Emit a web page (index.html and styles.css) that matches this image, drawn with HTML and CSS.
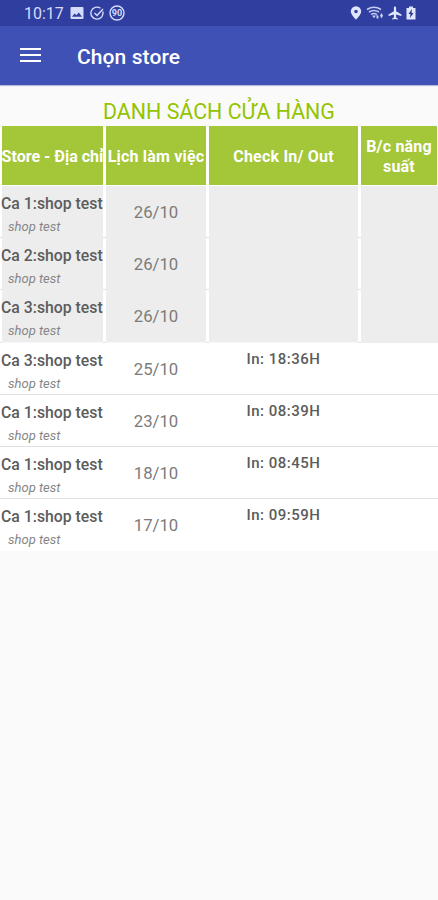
FILE: index.html
```html
<!DOCTYPE html>
<html lang="vi">

<head>
    <meta charset="UTF-8">
    <title>Chọn store</title>
    <link rel="stylesheet" href="styles.css">
</head>

<body>
    <div class="status">
        <span class="time">10:17</span>
        <svg class="picture" width="14" height="14" viewBox="0 0 14 14">
            <path fill="#d5dbfa" fill-rule="evenodd" d="M1.5 1h11q1 0 1 1v10q0 1-1 1h-11q-1 0-1-1V2q0-1 1-1zM2 10.8h10L8.8 6.5 6.300 9.300 4.500 7.500z" />
        </svg>
        <svg class="tick" width="15" height="15" viewBox="0 0 15 15" fill="none" stroke="#d5dbfa" stroke-width="1.4">
            <path d="M12.700 5.500A6 6 0 1 1 10.500 2.300M4.500 7l2.500 2.500 6-6.500" />
        </svg>
        <svg width="16" height="16" viewBox="0 0 16 16">
            <circle cx="8" cy="8" r="7" fill="none" stroke="#d5dbfa" stroke-width="1.400" />
            <text class="badge" x="8" y="11" text-anchor="middle">90</text>
        </svg>
        <div class="right">
            <svg width="12" height="14" viewBox="0 0 12 14">
                <path fill="#e1e6ff" fill-rule="evenodd" d="M6 .3a5.200 5.200 0 0 1 5.200 5.200C11.200 8.600 6 13.700 6 13.700S.8 8.600.8 5.500A5.200 5.200 0 0 1 6 .3zM6 3.700a1.800 1.800 0 1 0 0 3.600 1.800 1.800 0 0 0 0-3.600z" />
            </svg>
            <svg width="18" height="14" viewBox="0 0 18 14" fill="none" stroke="#c5cdf5">
                <path stroke-width="1.500" d="M1 3.500Q8 -.8 15 3.500M3 6Q8 3 13 6M5 8.500Q8 6.500 11 8.500" />
                <path fill="#c5cdf5" stroke="none" d="M6 9.500h4l-2 2.800zM10.500 12.500v-4l2 1.500v2.500zM14 9.500l1.500-2.500 1.500 2.500-1.500 3z" />
            </svg>
            <svg width="14" height="14" viewBox="0 0 14 14">
                <path fill="#e1e6ff" d="M7 .5c.7 0 1.100.6 1.100 1.300v3.400l5.400 3.400V10L8.100 8.400v3l1.700 1.200v1L7 12.900l-2.800.7v-1l1.700-1.200v-3L.5 10V8.600l5.400-3.400V1.800C5.900 1.100 6.300.5 7 .5z" />
            </svg>
            <svg width="10" height="14" viewBox="0 0 10 14">
                <path fill="#e1e6ff" d="M3 .5h4v1.500h2.500v11.500h-9V2H3z" />
                <path fill="#26348e" d="M6 3L2.500 8h2L4 12 7.500 7h-2z" />
            </svg>
        </div>
    </div>
    <div class="bar">
        <div class="menu">
            <span></span>
            <span></span>
            <span></span>
        </div>
        <h1>Chọn store</h1>
    </div>
    <h2>DANH SÁCH CỬA HÀNG</h2>
    <div class="row head">
        <div class="store">Store - Địa chỉ</div>
        <div>Lịch làm việc</div>
        <div>Check In/ Out</div>
        <div>B/c năng<br>suất</div>
    </div>
    <!-- danh sách ca làm việc -->
    <ul>
        <li class="row gray">
            <div><b>Ca 1:shop test</b><i>shop test</i></div>
            <div class="date">26/10</div>
            <div></div>
            <div></div>
        </li>
        <li class="row gray">
            <div><b>Ca 2:shop test</b><i>shop test</i></div>
            <div class="date">26/10</div>
            <div></div>
            <div></div>
        </li>
        <li class="row gray">
            <div><b>Ca 3:shop test</b><i>shop test</i></div>
            <div class="date">26/10</div>
            <div></div>
            <div></div>
        </li>
        <li class="row">
            <div><b>Ca 3:shop test</b><i>shop test</i></div>
            <div class="date">25/10</div>
            <div class="check">In: 18:36H</div>
            <div></div>
        </li>
        <li class="row">
            <div><b>Ca 1:shop test</b><i>shop test</i></div>
            <div class="date">23/10</div>
            <div class="check">In: 08:39H</div>
            <div></div>
        </li>
        <li class="row">
            <div><b>Ca 1:shop test</b><i>shop test</i></div>
            <div class="date">18/10</div>
            <div class="check">In: 08:45H</div>
            <div></div>
        </li>
        <li class="row">
            <div><b>Ca 1:shop test</b><i>shop test</i></div>
            <div class="date">17/10</div>
            <div class="check">In: 09:59H</div>
            <div></div>
        </li>
    </ul>
</body>

</html>
```

FILE: styles.css
```css
* {
    margin: 0;
    padding: 0;
    box-sizing: border-box;
}

body {
    height: 900px;
    background: #fafafa;
    font-family: Roboto, "Noto Sans", sans-serif;
    overflow: hidden;
}

.status {
    display: flex;
    align-items: center;
    height: 26px;
    padding: 0 22px 0 24px;
    background: #303f9f;
}

.time {
    width: 46px;
    font-size: 16px;
    color: #d5dbfa;
}

.picture {
    margin-right: 6px;
}

.tick {
    margin-right: 4px;
}

.badge {
    font-size: 9px;
    font-weight: bold;
    fill: #d5dbfa;
}

.right {
    display: flex;
    gap: 4px;
    margin-left: auto;
}

.bar {
    display: flex;
    align-items: center;
    height: 59px;
    padding-left: 20px;
    background: #3f51b5;
    box-shadow: 0 1px 1px #b9bddb;
}

.menu {
    width: 21px;
    margin-right: 36px;
    padding-bottom: 1px;
}

.menu span {
    display: block;
    height: 2px;
    margin-bottom: 4px;
    background: #fff;
}

.menu span:last-child {
    margin-bottom: 0;
}

h1 {
    padding-top: 2px;
    font-size: 21px;
    font-weight: 500;
    letter-spacing: 0.1px;
    color: #fff;
}

h2 {
    height: 41px;
    padding-top: 14px;
    font-size: 21.4px;
    font-weight: normal;
    line-height: 26px;
    text-align: center;
    color: #93c400;
}

.row {
    display: grid;
    grid-template-columns: 101px 100px 149px 76px;
    column-gap: 3px;
    padding-left: 2px;
}

.head {
    height: 60px;
    padding-bottom: 1px;
    background: #fff;
}

.head div {
    display: flex;
    align-items: center;
    justify-content: center;
    padding-top: 2px;
    background: #a4c639;
    color: #fff;
    font-size: 16px;
    font-weight: bold;
    letter-spacing: 0.2px;
    line-height: 20px;
    text-align: center;
    white-space: nowrap;
}

.head .store {
    letter-spacing: 0;
}

ul {
    list-style: none;
}

li.row {
    height: 52.2px;
    background: #fff;
    border-bottom: 1px solid #e0e0e0;
}

li.row:last-child {
    border-bottom: 0;
}

.gray div {
    background: #ededed;
    border-bottom: 1px solid #f8f8f8;
}

.gray div:last-child {
    margin-right: -2px;
    border-bottom: 0;
}

b {
    display: block;
    margin-left: -1px;
    padding-top: 8px;
    font-size: 15.8px;
    font-weight: 500;
    line-height: 20px;
    white-space: nowrap;
    color: #5c5c5c;
}

i {
    display: block;
    padding: 5px 0 0 6px;
    font-size: 13px;
    line-height: 16px;
    color: #858585;
}

.date {
    padding-top: 1px;
    font-size: 16.7px;
    line-height: 51px;
    text-align: center;
    color: #7b7b7b;
}

.check {
    padding-top: 6px;
    font-size: 15px;
    font-weight: 500;
    letter-spacing: 0.5px;
    line-height: 20px;
    text-align: center;
    color: #5c5c5c;
}
```
